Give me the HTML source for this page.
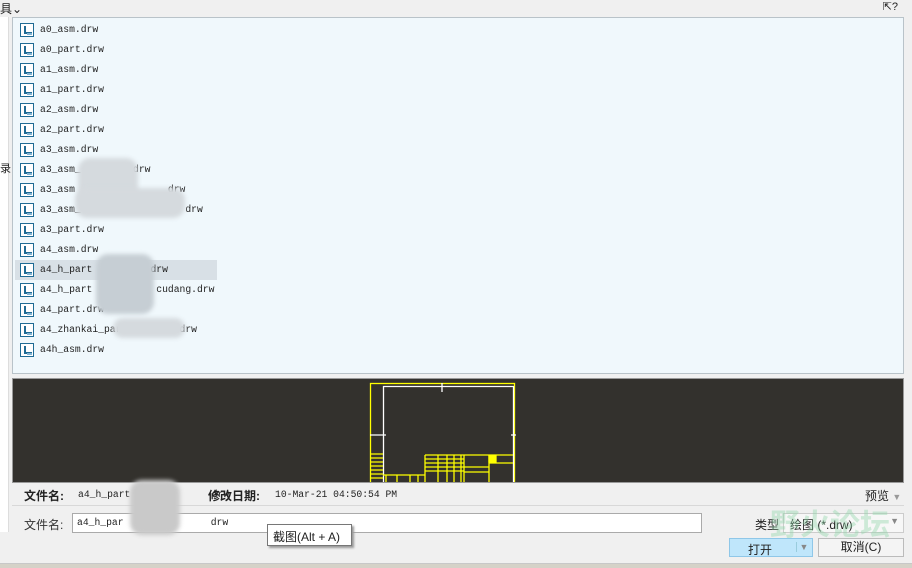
<!DOCTYPE html>
<html><head><meta charset="utf-8"><style>
*{margin:0;padding:0;box-sizing:border-box}
body{width:912px;height:568px;background:#f0f0f0;position:relative;overflow:hidden;font-family:"Liberation Sans","Noto Sans CJK SC",sans-serif;font-size:12px;color:#222}
.mono{font-family:"Liberation Mono","Noto Sans CJK SC",monospace;font-size:9.7px;color:#222}
#list{position:absolute;left:12px;top:17px;width:892px;height:357px;background:#f0f8fc;border:1px solid #b9c3c9}
.row{position:absolute;left:2px;height:20px;line-height:20px;width:900px}
.row .ic{position:absolute;left:5px;top:3px;width:14px;height:14px;border:1px solid #1f6b94;background:#fff}
.row .ic:before{content:"";position:absolute;left:3px;top:2px;width:6px;height:6px;border-left:2px solid #1f6b94;border-bottom:2px solid #1f6b94}
.row .ic:after{content:"";position:absolute;right:1px;bottom:1px;width:5px;height:2px;background:#7fb4d4}
.row span{position:absolute;left:25px}
.blur{position:absolute;background:#d5dade;border-radius:12px;filter:blur(2px)}
</style></head><body>
<div style="position:absolute;left:0;top:0;font-size:12px">具⌄</div>
<div style="position:absolute;right:14px;top:0;font-size:11px">⇱?</div>
<div style="position:absolute;left:0;top:17px;width:9px;height:515px;background:#fff;border-right:1px solid #ddd"></div>
<div style="position:absolute;left:0;top:160px;font-size:11px">录</div>
<div id="list" class="mono">
<div class="row" style="top:2px"><i class="ic"></i><span>a0_asm.drw</span></div>
<div class="row" style="top:22px"><i class="ic"></i><span>a0_part.drw</span></div>
<div class="row" style="top:42px"><i class="ic"></i><span>a1_asm.drw</span></div>
<div class="row" style="top:62px"><i class="ic"></i><span>a1_part.drw</span></div>
<div class="row" style="top:82px"><i class="ic"></i><span>a2_asm.drw</span></div>
<div class="row" style="top:102px"><i class="ic"></i><span>a2_part.drw</span></div>
<div class="row" style="top:122px"><i class="ic"></i><span>a3_asm.drw</span></div>
<div class="row" style="top:142px"><i class="ic"></i><span>a3_asm_&nbsp;&nbsp;&nbsp;&nbsp;&nbsp;&nbsp;&nbsp;&nbsp;&nbsp;drw</span></div>
<div class="row" style="top:162px"><i class="ic"></i><span>a3_asm&nbsp;&nbsp;&nbsp;&nbsp;&nbsp;&nbsp;&nbsp;&nbsp;&nbsp;&nbsp;&nbsp;&nbsp;&nbsp;&nbsp;&nbsp;&nbsp;drw</span></div>
<div class="row" style="top:182px"><i class="ic"></i><span>a3_asm_&nbsp;&nbsp;&nbsp;&nbsp;&nbsp;&nbsp;&nbsp;&nbsp;&nbsp;&nbsp;&nbsp;&nbsp;&nbsp;&nbsp;&nbsp;&nbsp;&nbsp;&nbsp;drw</span></div>
<div class="row" style="top:202px"><i class="ic"></i><span>a3_part.drw</span></div>
<div class="row" style="top:222px"><i class="ic"></i><span>a4_asm.drw</span></div>
<div class="row" style="top:242px;background:#d8e0e6;width:202px"><i class="ic"></i><span>a4_h_part&nbsp;&nbsp;&nbsp;&nbsp;&nbsp;&nbsp;&nbsp;&nbsp;&nbsp;&nbsp;drw</span></div>
<div class="row" style="top:262px"><i class="ic"></i><span>a4_h_part&nbsp;&nbsp;&nbsp;&nbsp;&nbsp;&nbsp;&nbsp;&nbsp;&nbsp;&nbsp;&nbsp;cudang.drw</span></div>
<div class="row" style="top:282px"><i class="ic"></i><span>a4_part.drw</span></div>
<div class="row" style="top:302px"><i class="ic"></i><span>a4_zhankai_part&nbsp;&nbsp;&nbsp;&nbsp;&nbsp;&nbsp;&nbsp;&nbsp;&nbsp;drw</span></div>
<div class="row" style="top:322px"><i class="ic"></i><span>a4h_asm.drw</span></div>
<div class="blur" style="left:65px;top:140px;width:60px;height:50px"></div>
<div class="blur" style="left:62px;top:170px;width:110px;height:30px"></div>
<div class="blur" style="left:83px;top:236px;width:58px;height:60px;background:#c6ced4"></div>
<div class="blur" style="left:100px;top:300px;width:72px;height:20px"></div>
</div>
<div style="position:absolute;left:12px;top:378px;width:892px;height:105px;background:#33312d;border:1px solid #999;overflow:hidden">
<svg width="892" height="105" style="position:absolute;left:-1px;top:-1px" fill="none" stroke="#ffff00" stroke-width="1.3">
<rect x="358.5" y="5.5" width="144" height="110"/>
<path d="M371.5 115V8.5H501.5V115" stroke="#fff"/>
<path d="M430 5V14M358 57H374M499 57H504" stroke="#fff"/>
<path d="M358 76H371M358 80H371M358 84H371M358 88H371M358 92H371M358 96H371M358 100H371M371 97H413M374 97V105M385 97V105M398 97V105M406 97V105"/>
<path d="M413 77H501M413 77V105M413 81H452M413 85H452M413 89H452M413 93H452M426 77V105M435 77V105M442 77V105M449 77V105M452 77V105M452 89H477M477 77V105M477 85H501M452 94H477"/>
<rect x="477" y="78" width="7" height="6" fill="#ffff00"/>
</svg></div>
<div style="position:absolute;left:12px;top:485px;width:892px;border-bottom:1px solid #d8d8d8;height:21px"></div>
<div style="position:absolute;left:24px;top:487px;font-weight:bold;font-size:12px">文件名:</div>
<div class="mono" style="position:absolute;left:78px;top:489px">a4_h_part&nbsp;&nbsp;&nbsp;&nbsp;&nbsp;&nbsp;&nbsp;&nbsp;&nbsp;&nbsp;&nbsp;&nbsp;&nbsp;&nbsp;drw</div>
<div style="position:absolute;left:208px;top:487px;font-weight:bold">修改日期:</div>
<div class="mono" style="position:absolute;left:275px;top:489px">10-Mar-21 04:50:54 PM</div>
<div style="position:absolute;left:865px;top:487px">预览 <span style="color:#999;font-size:9px">▼</span></div>
<div style="position:absolute;left:24px;top:516px;color:#333">文件名:</div>
<div class="mono" style="position:absolute;left:72px;top:513px;width:630px;height:20px;background:#fff;border:1px solid #aaa;padding:3px 4px">a4_h_par&nbsp;&nbsp;&nbsp;&nbsp;&nbsp;&nbsp;&nbsp;&nbsp;&nbsp;&nbsp;&nbsp;&nbsp;&nbsp;&nbsp;&nbsp;drw</div>
<div class="blur" style="left:130px;top:480px;width:50px;height:55px;background:#c9c9c9"></div>
<div style="position:absolute;left:755px;top:516px">类型</div>
<div style="position:absolute;left:783px;top:513px;width:121px;height:20px;background:#f7f7f7;border:1px solid #ccc;padding:2px 6px">绘图 (*.drw) <span style="position:absolute;right:4px;color:#888;font-size:9px">▼</span></div>
<div style="position:absolute;left:729px;top:538px;width:84px;height:19px;background:#bfe6fb;border:1px solid #8fc7e8;padding:2px 18px">打开<span style="position:absolute;left:66px;top:3px;color:#888;font-size:9px;border-left:1px solid #9cd">&nbsp;▼</span></div>
<div style="position:absolute;left:818px;top:538px;width:86px;height:19px;background:#f4f4f4;border:1px solid #bbb;text-align:center;line-height:17px">取消(C)</div>
<div style="position:absolute;left:267px;top:524px;width:85px;height:22px;background:#fff;border:1px solid #777;box-shadow:2px 2px 2px #999;padding:3px 5px;font-size:12px">截图(Alt + A)</div>
<div style="position:absolute;left:770px;top:500px;font-size:30px;color:#8fd6a8;opacity:.4;font-weight:bold">野火论坛</div>
<div style="position:absolute;left:0;top:563px;width:912px;height:5px;background:#d5d2c8;border-top:1px solid #c8c8c8"></div>
</body></html>
